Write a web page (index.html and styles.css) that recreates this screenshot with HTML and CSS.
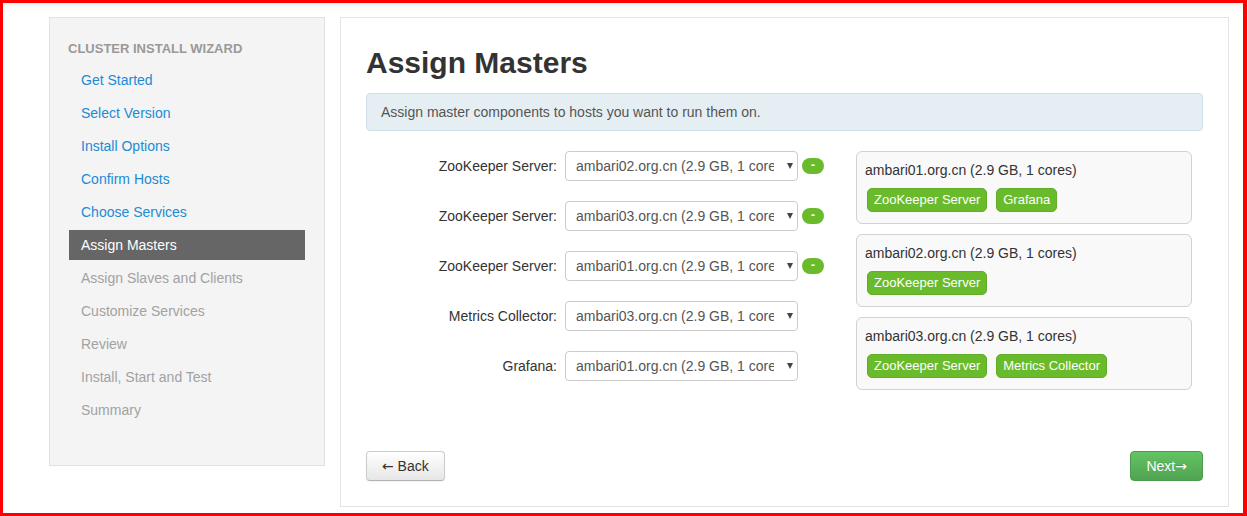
FILE: index.html
```html
<!DOCTYPE html>
<html lang="en">
<head>
<meta charset="utf-8">
<title>Assign Masters</title>
<link rel="stylesheet" href="styles.css">
</head>
<body>
<div class="frame">
  <aside class="wizard-nav">
    <div class="wizard-title">CLUSTER INSTALL WIZARD</div>
    <ul class="steps">
      <li class="step done">Get Started</li>
      <li class="step done">Select Version</li>
      <li class="step done">Install Options</li>
      <li class="step done">Confirm Hosts</li>
      <li class="step done">Choose Services</li>
      <li class="step active">Assign Masters</li>
      <li class="step todo">Assign Slaves and Clients</li>
      <li class="step todo">Customize Services</li>
      <li class="step todo">Review</li>
      <li class="step todo">Install, Start and Test</li>
      <li class="step todo">Summary</li>
    </ul>
  </aside>

  <main class="wizard-body">
    <h2 class="page-title">Assign Masters</h2>
    <div class="alert-info">Assign master components to hosts you want to run them on.</div>

    <div class="assign">
      <div class="assign-form">
        <div class="row">
          <label class="row-label">ZooKeeper Server:</label>
          <span class="select-wrap"><select class="select"><option>ambari02.org.cn (2.9 GB, 1 cores)</option></select></span>
          <span class="remove">-</span>
        </div>
        <div class="row">
          <label class="row-label">ZooKeeper Server:</label>
          <span class="select-wrap"><select class="select"><option>ambari03.org.cn (2.9 GB, 1 cores)</option></select></span>
          <span class="remove">-</span>
        </div>
        <div class="row">
          <label class="row-label">ZooKeeper Server:</label>
          <span class="select-wrap"><select class="select"><option>ambari01.org.cn (2.9 GB, 1 cores)</option></select></span>
          <span class="remove">-</span>
        </div>
        <div class="row">
          <label class="row-label">Metrics Collector:</label>
          <span class="select-wrap"><select class="select"><option>ambari03.org.cn (2.9 GB, 1 cores)</option></select></span>
        </div>
        <div class="row">
          <label class="row-label">Grafana:</label>
          <span class="select-wrap"><select class="select"><option>ambari01.org.cn (2.9 GB, 1 cores)</option></select></span>
        </div>
      </div>

      <div class="hosts">
        <div class="host-card">
          <div class="host-name">ambari01.org.cn (2.9 GB, 1 cores)</div>
          <div class="badges"><span class="badge">ZooKeeper Server</span><span class="badge">Grafana</span></div>
        </div>
        <div class="host-card">
          <div class="host-name">ambari02.org.cn (2.9 GB, 1 cores)</div>
          <div class="badges"><span class="badge">ZooKeeper Server</span></div>
        </div>
        <div class="host-card">
          <div class="host-name">ambari03.org.cn (2.9 GB, 1 cores)</div>
          <div class="badges"><span class="badge">ZooKeeper Server</span><span class="badge">Metrics Collector</span></div>
        </div>
      </div>
    </div>

    <div class="footer">
      <button class="btn btn-back"><span class="arr">&larr;</span> Back</button>
      <button class="btn btn-next">Next<span class="arr">&rarr;</span></button>
    </div>
  </main>
</div>
</body>
</html>
```

FILE: styles.css
```css
* { box-sizing: border-box; }

html, body {
  margin: 0;
  padding: 0;
  background: #fff;
}

body {
  font-family: "Liberation Sans", Arial, sans-serif;
  font-size: 14px;
  line-height: 20px;
  color: #333;
}

.frame {
  width: 1247px;
  height: 516px;
  border-style: solid;
  border-color: #ff0000;
  border-width: 3px 4px 3px 3px;
  padding: 14px 14px 0 46px;
  display: flex;
  align-items: flex-start;
  gap: 15px;
  box-shadow: inset 0 9px 8px -7px rgba(0, 0, 0, 0.07);
}

/* Sidebar */
.wizard-nav {
  width: 276px;
  height: 449px;
  flex: none;
  background: #f4f4f4;
  border: 1px solid #e1e1e1;
  padding: 21px 17px 0 18px;
}

.wizard-title {
  font-size: 13px;
  font-weight: bold;
  line-height: 20px;
  color: #999;
}

.steps {
  list-style: none;
  margin: 6px 0 0 1px;
  padding: 0;
}

.step {
  width: 236px;
  height: 30px;
  line-height: 30px;
  padding-left: 12px;
  margin-bottom: 3px;
  font-size: 14px;
}

.step.done { color: #1b8bd4; }
.step.active { background: #666; color: #fff; }
.step.todo { color: #a2a2a2; }

/* Main panel */
.wizard-body {
  width: 889px;
  height: 490px;
  flex: none;
  border: 1px solid #e3e3e3;
  background: #fff;
  padding: 28px 25px 25px 25px;
  display: flex;
  flex-direction: column;
}

.page-title {
  margin: 0;
  font-size: 30px;
  line-height: 33px;
  font-weight: bold;
  color: #333;
}

.alert-info {
  margin-top: 14px;
  height: 38px;
  padding: 8px 14px;
  background: #e5eff3;
  border: 1px solid #cfdfe7;
  border-radius: 4px;
  color: #555;
}

.assign {
  margin-top: 20px;
  display: flex;
  align-items: flex-start;
}

.assign-form {
  width: 458px;
  display: flex;
  flex-direction: column;
  gap: 20px;
}

.row {
  display: flex;
  align-items: center;
  height: 30px;
}

.row-label {
  width: 191px;
  text-align: right;
  color: #333;
  margin-right: 8px;
}

.select-wrap {
  position: relative;
  display: block;
  width: 233px;
  height: 30px;
}

.select-wrap::after {
  content: "";
  position: absolute;
  right: 5px;
  top: 12px;
  width: 0;
  height: 0;
  border-left: 3.5px solid transparent;
  border-right: 3.5px solid transparent;
  border-top: 6px solid #444;
  pointer-events: none;
}

.select {
  -webkit-appearance: none;
  appearance: none;
  display: block;
  width: 233px;
  height: 30px;
  margin: 0;
  border: 1px solid #ccc;
  border-radius: 4px;
  background: #fff;
  padding: 0 23px 0 10px;
  font-family: "Liberation Sans", Arial, sans-serif;
  font-size: 14px;
  color: #555;
  outline: none;
}

.remove {
  margin-left: 4px;
  width: 22px;
  height: 16px;
  border-radius: 8px;
  background: #6abb2c;
  color: #fff;
  font-size: 12px;
  line-height: 15px;
  text-align: center;
  font-weight: bold;
}

.hosts {
  margin-left: 32px;
  width: 336px;
  display: flex;
  flex-direction: column;
  gap: 10px;
}

.host-card {
  height: 73px;
  border: 1px solid #d2d2d2;
  border-radius: 6px;
  background: #f9f9f9;
  padding: 8px 8px 11px 8px;
}

.host-name {
  color: #333;
  line-height: 20px;
}

.badges {
  margin-top: 8px;
  padding-left: 2px;
  display: flex;
  gap: 9px;
}

.badge {
  height: 24px;
  line-height: 22px;
  padding: 0 6px;
  border: 1px solid #61ad27;
  border-radius: 5px;
  background: #6abb2c;
  color: #fff;
  font-size: 13px;
}

/* Footer */
.footer {
  margin-top: auto;
  display: flex;
  justify-content: space-between;
  align-items: flex-end;
}

.btn {
  font-family: "Liberation Sans", Arial, sans-serif;
  font-size: 14px;
  line-height: 20px;
  height: 30px;
  padding: 4px 15px;
  border-radius: 4px;
  cursor: pointer;
}

.arr {
  font-family: "DejaVu Sans", sans-serif;
  font-size: 14px;
}

.btn-back {
  color: #333;
  background: linear-gradient(#ffffff, #e6e6e6);
  border: 1px solid #ccc;
  border-bottom-color: #b3b3b3;
  box-shadow: inset 0 1px 0 rgba(255,255,255,.2), 0 1px 2px rgba(0,0,0,.05);
}

.btn-next {
  color: #fff;
  background: linear-gradient(#62c462, #51a351);
  border: 1px solid #4c9a4c;
  text-shadow: 0 -1px 0 rgba(0,0,0,.15);
  padding: 4px 15px;
}
```
